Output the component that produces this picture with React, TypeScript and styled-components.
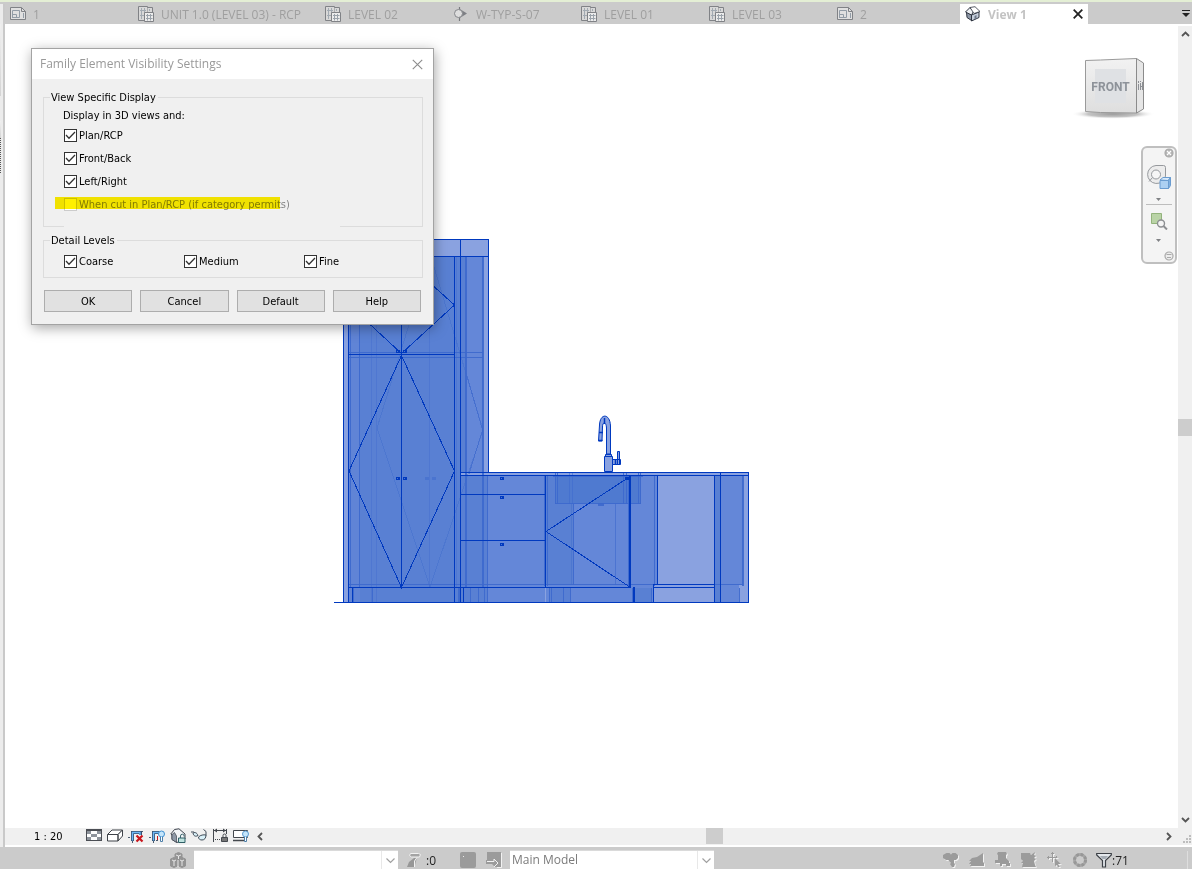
import React from "react";
import styled, { createGlobalStyle, css } from "styled-components";

const ui = `"Open Sans", "Noto Sans", "Liberation Sans", sans-serif`;
const dialogFont = `"DejaVu Sans Condensed", "Noto Sans", "Liberation Sans", sans-serif`;

const GlobalStyle = createGlobalStyle`
  *, *::before, *::after { box-sizing: border-box; }
  body { margin: 0; background: #fff; font-family: ${ui}; }
  button, select, input { font: inherit; color: inherit; margin: 0; padding: 0; }
  svg { display: block; flex: none; }
`;

const Page = styled.div`
  min-height: 100vh;
  display: flex;
  flex-direction: column;
  border-top: 2px solid #e4efd5;
`;

/* ---------- tabs ---------- */

const TabBar = styled.nav`
  display: flex;
  align-items: flex-end;
  height: 22px;
  padding-left: 5px;
  background: #cbcbcb;
`;

const Tab = styled.div<{ $active?: boolean; $wide?: boolean }>`
  display: flex;
  align-items: center;
  flex: none;
  width: ${(p) => (p.$wide ? 187 : 128)}px;
  height: 20px;
  padding: 0 5px;
  background: ${(p) => (p.$active ? "#fff" : "transparent")};
`;

const TabButton = styled.button<{ $active?: boolean }>`
  display: flex;
  align-items: center;
  gap: 7px;
  flex: 1;
  height: 20px;
  border: 0;
  background: none;
  font-size: 12px;
  line-height: 20px;
  font-weight: ${(p) => (p.$active ? 700 : 400)};
  color: ${(p) => (p.$active ? "#c3c3c3" : "#9f9f9f")};
  white-space: nowrap;
`;

const TabLabel = styled.span`
  padding-top: 1px;
`;

const IconButton = styled.button<{ $w?: number; $h?: number }>`
  display: flex;
  align-items: center;
  justify-content: center;
  flex: none;
  width: ${(p) => p.$w ?? 16}px;
  height: ${(p) => p.$h ?? 16}px;
  border: 0;
  background: none;
`;

const TabMenu = styled(IconButton)`
  margin-left: auto;
  align-self: center;
`;

/* ---------- work area ---------- */

const Workspace = styled.div`
  display: flex;
  flex: 1;
`;

const Gutter = styled.div`
  display: flex;
  flex-direction: column;
  width: 5px;
  flex: none;
  margin-top: -20px;
  border-right: 2px solid #c9c9c9;
  background: #ececec;
`;

const GutterPanel = styled.div<{ $h: number; $top: number; $dots?: boolean }>`
  width: 1px;
  height: ${(p) => p.$h}px;
  margin-top: ${(p) => p.$top}px;
  background: ${(p) =>
    p.$dots
      ? "repeating-linear-gradient(#555 0 1px, #eee 1px 2px)"
      : "linear-gradient(#f0f0f0, #d4d4d4)"};
`;

const ViewColumn = styled.div`
  display: flex;
  flex-direction: column;
  flex: 1;
  min-width: 0;
`;

const CanvasRow = styled.div`
  display: flex;
  flex: 1;
`;

const Canvas = styled.main`
  position: relative;
  flex: 1;
  min-width: 0;
  min-height: 600px;
  background: #fff;
  overflow: hidden;
`;

const Drawing = styled.svg`
  position: absolute;
  left: 329px;
  top: 215px;
`;

const CubeHolder = styled.div`
  position: absolute;
  right: 23px;
  top: 28px;
`;

const NavPanel = styled.div`
  position: absolute;
  right: 1px;
  top: 122px;
  width: 36px;
  display: flex;
  flex-direction: column;
  align-items: center;
  border: 2px solid #bfbfbf;
  border-radius: 6px;
  background: #f4f4f4;
`;

const NavCorner = styled(IconButton)<{ $top?: number }>`
  align-self: flex-end;
  margin-top: ${(p) => p.$top ?? 0}px;
`;

const NavRule = styled.hr`
  width: 26px;
  height: 1px;
  margin: 0;
  border: 0;
  background: #bdbdbd;
`;

const VerticalBar = styled.div`
  display: flex;
  flex-direction: column;
  justify-content: space-between;
  align-items: center;
  width: 14px;
  margin-top: 2px;
  background: #f0f0f0;
`;

const Thumb = styled.div<{ $vertical?: boolean }>`
  flex: none;
  width: ${(p) => (p.$vertical ? 14 : 17)}px;
  height: ${(p) => (p.$vertical ? 17 : 16)}px;
  background: #cdcdcd;
`;

const ViewBar = styled.div`
  display: flex;
  height: 17px;
  margin-bottom: 2px;
  background: #f0f0f0;
`;

const Scale = styled.button`
  width: 79px;
  padding-left: 29px;
  border: 0;
  background: none;
  text-align: left;
  font-family: ${dialogFont};
  font-size: 11px;
  line-height: 17px;
  color: #000;
`;

const ViewTools = styled.div`
  display: flex;
  gap: 5px;
  padding: 0 3px 0 2px;
`;

const HorizontalBar = styled.div`
  display: flex;
  flex: 1;
  justify-content: space-between;
`;

const Grip = styled.div`
  display: flex;
  align-items: flex-end;
  justify-content: flex-end;
  width: 15px;
  padding: 0 1px 2px 0;
`;

/* ---------- status bar ---------- */

const StatusBar = styled.footer`
  display: flex;
  align-items: center;
  height: 22px;
  padding: 4px 4px 0 170px;
  background: #cbcbcb;
  font-size: 12px;
  color: #222;
`;

const SelectBox = styled.label`
  display: grid;
  width: 204px;
  height: 18px;
  background: #fff;
  box-shadow: 0 -1px 0 #dadada;
  > * { grid-area: 1 / 1; }
  > svg { place-self: center end; pointer-events: none; }
`;

const Select = styled.select`
  width: 100%;
  height: 18px;
  padding: 0 20px 0 2px;
  border: 0;
  appearance: none;
  background: #fff;
  color: #7b7b7b;
  font-size: 12px;
  line-height: 18px;
`;

const StatusCluster = styled.div<{ $gap: number; $end?: boolean }>`
  display: flex;
  align-items: center;
  gap: ${(p) => p.$gap}px;
  padding: 0 8px;
  margin-left: ${(p) => (p.$end ? "auto" : "0")};
`;

const WorksetButton = styled(IconButton)`
  margin-right: 8px;
`;

const Count = styled.span<{ $w: number }>`
  width: ${(p) => p.$w}px;
  white-space: nowrap;
`;

const EndRule = styled.span`
  width: 1px;
  height: 18px;
  margin-left: 57px;
  background: #dedede;
`;

/* ---------- dialog ---------- */

const Dialog = styled.section`
  position: absolute;
  left: 26px;
  top: 24px;
  width: 403px;
  border: 1px solid #a3a3a3;
  background: #f0f0f0;
  box-shadow: 1px 3px 12px rgba(0, 0, 0, 0.35);
`;

const DialogTitle = styled.header`
  display: flex;
  align-items: center;
  justify-content: space-between;
  height: 30px;
  padding: 0 8px;
  background: #fff;
`;

const Title = styled.h1`
  margin: 0;
  font-size: 12px;
  line-height: 16px;
  font-weight: 400;
  color: #999;
`;

const DialogBody = styled.form`
  padding: 11px 10px 12px 11px;
  font-family: ${dialogFont};
  font-size: 11px;
  line-height: 14px;
  color: #000;
`;

const Group = styled.fieldset<{ $open?: boolean }>`
  position: relative;
  min-width: 0;
  margin: 0;
  padding: 4px 6px;
  border: 1px solid #dcdcdc;
  ${(p) =>
    p.$open
      ? css`
          margin-bottom: 6px;
          padding-bottom: 10px;
          &::after {
            content: "";
            position: absolute;
            left: 20px;
            right: 82px;
            bottom: -1px;
            height: 1px;
            background: #f0f0f0;
          }
        `
      : css`
          margin-bottom: 12px;
          padding-top: 2px;
        `}
`;

const Legend = styled.legend`
  padding: 1px 2px 0 1px;
`;

const Caption = styled.p`
  margin: 0 0 1px;
  padding-left: 13px;
`;

const Stack = styled.div`
  display: flex;
  flex-direction: column;
  padding-left: 14px;
`;

const Levels = styled.div`
  display: grid;
  grid-template-columns: 120px 120px 1fr;
  padding-left: 14px;
`;

const Option = styled.label<{ $marked?: boolean }>`
  position: relative;
  display: flex;
  align-items: center;
  gap: 2px;
  height: 23px;
  color: ${(p) => (p.$marked ? "#838383" : "#000")};
  white-space: nowrap;
  ${(p) =>
    p.$marked &&
    css`
      &::after {
        content: "";
        position: absolute;
        left: -9px;
        top: 4px;
        width: 225px;
        height: 12px;
        background: #fff000;
        mix-blend-mode: multiply;
      }
    `}
`;

const BoxWrap = styled.span`
  display: grid;
  > * { grid-area: 1 / 1; }
  > svg { pointer-events: none; }
`;

const Box = styled.input`
  appearance: none;
  width: 13px;
  height: 13px;
  border: 1px solid #333;
  background: #fff;
  &:disabled { border-color: #ccc; }
`;

const Actions = styled.div`
  display: grid;
  grid-template-columns: repeat(4, 1fr);
  gap: 8px;
  padding: 0 2px 0 1px;
`;

const Action = styled.button`
  height: 22px;
  padding-top: 1px;
  border: 1px solid #adadad;
  background: #e1e1e1;
  line-height: 19px;
`;

/* ---------- icons ---------- */

const SheetIcon = () => (
  <svg width="16" height="16" viewBox="0 0 16 16" fill="none">
    <path d="M.5 1.500h11l4 4v8H.5z" fill="#e0e0e0" stroke="#808286" />
    <path d="M11.500 1.500v4h4" stroke="#808286" />
    <path d="M2.500 12V4.500h7V11.500h-7M3 8.500h3.500v3M13.500 7v5" stroke="#929ca6" />
  </svg>
);

const PlanIcon = () => (
  <svg width="16" height="16" viewBox="0 0 16 16" fill="none">
    <path d="M.5.5h9v14h-9z" fill="#d8d8d8" stroke="#808286" />
    <path d="M9.500 1.500h5v5h-5" fill="#d8d8d8" stroke="#808286" />
    <path d="M3.500 2v11M6.500 2v11M2 4.500h6M2 9.500h4M11.500 3v2" stroke="#a2aab2" />
    <path d="M6.500 6.500h9v9h-9z" fill="#ececec" stroke="#808286" />
    <path d="M9.500 8v6.500M12.500 8v6.500M8 9.500h6.500M8 12.500h6.500" stroke="#9ba3ab" />
  </svg>
);

const SectionIcon = () => (
  <svg width="16" height="16" viewBox="0 0 16 16">
    <path d="M6.500 1v14" stroke="#77797d" strokeWidth="1.200" />
    <path d="M6 2.500l8 5-8 5z" fill="#7d7f84" />
    <circle cx="5.500" cy="7.500" r="4" fill="#dedede" stroke="#85878b" />
  </svg>
);

const HouseIcon = () => (
  <svg width="16" height="16" viewBox="0 0 16 16">
    <path d="M1.500 6L6.500 9v5.500L2 11.500z" fill="#8d97a6" stroke="#2f3541" />
    <path d="M6.500 9l7.500-3v5.500l-7.500 3.500z" fill="#c5cedb" stroke="#2f3541" />
    <path d="M.5 6L5 1.500l3.500 4L6.500 9z" fill="#eef1f4" stroke="#2f3541" />
    <path d="M5 1.500l5-.8 5 4.800-6 2z" fill="#fff" stroke="#2f3541" strokeWidth=".8" />
    <path d="M9.500 10l2-1v3.500l-2 1z" fill="#6c7788" />
  </svg>
);

const CloseX = ({ size, color, width }: { size: number; color: string; width: number }) => (
  <svg width={size} height={size} viewBox="0 0 10 10">
    <path d="M.7.7l8.600 8.600M9.300.7L.7 9.300" stroke={color} strokeWidth={width} />
  </svg>
);

const Chevron = ({ turn, color = "#555" }: { turn: number; color?: string }) => (
  <svg width="9" height="9" viewBox="0 0 9 9">
    <path
      d="M1 6l3.500-3.500L8 6"
      fill="none"
      stroke={color}
      strokeWidth="1.800"
      transform={`rotate(${turn} 4.500 4.500)`}
    />
  </svg>
);

const DropMark = () => (
  <svg width="17" height="18" viewBox="0 0 17 18" fill="none">
    <path d="M.5 0v18" stroke="#e8e8e8" />
    <path d="M5.500 7.500l4 4 4-4" stroke="#a0a0a0" strokeWidth="1.200" />
  </svg>
);

const Tick = () => (
  <svg width="13" height="13" viewBox="0 0 13 13">
    <path d="M2 6l3 3.200L11 3" fill="none" stroke="#333" strokeWidth="1.300" />
  </svg>
);

const SmallDown = () => (
  <svg width="6" height="3" viewBox="0 0 6 3">
    <path d="M0 0h5L2.500 3z" fill="#808285" />
  </svg>
);

const viewTools: { name: string; art: React.ReactNode }[] = [
  {
    name: "Detail level",
    art: (
      <g shapeRendering="crispEdges">
        <path d="M0 1h16v12H0z" fill="#4b4e54" />
        <path d="M1 3h14v9H1z" fill="#fff" />
        <path d="M1 3h4v3H1zM11 3h4v3h-4zM5 6h6v3H5zM1 9h4v3H1zM11 9h4v3h-4z" fill="#8e949c" />
      </g>
    ),
  },
  {
    name: "Visual style",
    art: (
      <g fill="#fff" stroke="#3f4349">
        <path d="M.5 6.500l4.500-4.500h10.500l-4.500 4.500z" />
        <path d="M.5 6.500h10.500v6.500H.5zM11 6.500l4.500-4.500v6l-4.500 5z" />
      </g>
    ),
  },
  {
    name: "Crop view",
    art: (
      <g fill="none">
        <path d="M0 9.500h3M13 3.500h3M4.500 13v2" stroke="#4c5c70" strokeDasharray="2 1" />
        <path d="M4.500 13V4.500h8V7" stroke="#35506e" strokeWidth="3" />
        <path d="M4.500 12.500V4.500h7.500V7" stroke="#6db8f8" strokeWidth="1.400" />
        <path d="M8.500 7.500l6 6M14.500 7.500l-6 6" stroke="#c8161d" strokeWidth="2.200" />
      </g>
    ),
  },
  {
    name: "Show crop region",
    art: (
      <g fill="none">
        <path d="M0 9.500h3M4.500 13v2M7 12.500h3" stroke="#4c5c70" strokeDasharray="2 1" />
        <path d="M4.500 13V4.500h6" stroke="#35506e" strokeWidth="3" />
        <path d="M4.500 12.500V4.500h6" stroke="#6db8f8" strokeWidth="1.400" />
        <path d="M8.500 8v4" stroke="#c8161d" />
        <circle cx="12.500" cy="6" r="3" fill="#c4e5fb" stroke="#3e8fd0" />
        <path d="M11.500 9v4.500h2V9" fill="#fff" stroke="#4d7ea8" />
      </g>
    ),
  },
  {
    name: "Lock 3D view",
    art: (
      <g>
        <path d="M4.500 1.500L9 .8l6 5.200v5l-8 3.500-5-3V7L.8 6z" fill="#f2f4f6" stroke="#3d434d" />
        <path d="M2 6.500v5l4.500 3V8l-2-3.500z" fill="#8f99a6" stroke="#3d434d" strokeWidth=".7" />
        <path d="M10.500 10V8a1.800 1.800 0 0 1 3.600 0v.5" fill="none" stroke="#3f6870" />
        <path d="M8.500 10h6.500v4.500H8.500z" fill="#bfe3df" stroke="#2f5f66" />
      </g>
    ),
  },
  {
    name: "Temporary hide or isolate",
    art: (
      <g fill="#d9f0f8" stroke="#3f4b57">
        <path d="M0 4h3l4 4M15 7.500V3.500L12.500 1.500" fill="none" />
        <path d="M7.500 9c2-2 5-2.500 7.500-2 0 3-1.500 5-4 5-2 0-3.500-1-3.500-3z" />
        <path d="M2 5c1.500-1 4-.5 5 2.500-2.500 1.500-4.500.5-5-2.500z" />
      </g>
    ),
  },
  {
    name: "Reveal constraints",
    art: (
      <g fill="none" stroke="#44484e">
        <path d="M1.500 1v13M14.500 1v5M2 2.500h12" />
        <path d="M2 2.500l3-2v4zM14 2.500l-3-2v4z" fill="#44484e" stroke="none" />
        <path d="M3 11.500h6" strokeDasharray="1 1" />
        <path d="M11 9V7.500a1.500 1.500 0 0 1 3 0V9" />
        <path d="M9.500 9.500h6v4h-6z" fill="#777" />
      </g>
    ),
  },
  {
    name: "Worksharing display",
    art: (
      <g fill="none">
        <path d="M.5 2.500h14v7H.5z" fill="#fff" stroke="#44484e" />
        <path d="M0 12.500h11" stroke="#44484e" strokeWidth="1.500" />
        <circle cx="12.500" cy="6" r="3" fill="#c4e5fb" stroke="#5b9bd0" />
        <path d="M11.500 9v4.500h2V9" fill="#fff" stroke="#4d7ea8" />
      </g>
    ),
  },
];

const GreyIcon = ({ children }: { children: React.ReactNode }) => (
  <svg width="16" height="16" viewBox="0 0 16 16">
    <g transform="translate(1 1)" fill="#f2f2f2" stroke="#f2f2f2">{children}</g>
    <g fill="#9b9b9b" stroke="#9b9b9b">{children}</g>
  </svg>
);

const Bricks = () => (
  <svg width="16" height="16" viewBox="0 0 16 16">
    <g fill="#949494" stroke="#949494">
      <path d="M5 2L8.500.5 12 2v6L8.500 9.500 5 8z" />
      <path d="M.5 7L4 5.500 7.500 7v7L4 15.500.5 14zM8.500 7L12 5.500 15.500 7v7L12 15.500 8.500 14z" />
      <path d="M6 3l2.500 1L11 3M8.500 4v3M2 8l2 1 2-1M4 9v5M10 8l2 1 2-1M12 9v5M8 8v7" fill="none" stroke="#f0f0f0" strokeWidth=".9" />
    </g>
  </svg>
);

const selectTools: { name: string; art: React.ReactNode }[] = [
  {
    name: "Select links",
    art: (
      <g stroke="none">
        <path d="M3.500 1h3L8 2.500 9.500 1h3L15 3v3l-2 2H10L8 7.500 6 8H3L0 6V3z" />
        <path d="M5 7h6v4l1 1-1 3H9l-2-3 1-1-2-2z" />
      </g>
    ),
  },
  { name: "Select underlay elements", art: <path d="M3 6l5-1 6-4v9l1 1v3H1l1-2H0l2-3H0z" stroke="none" /> },
  { name: "Select pinned elements", art: <path d="M3 0h8l1 2-1 1v3l3 3v2h1v3h-4v-2H7v2H5v-3H0V8h3V3L2 2z" stroke="none" /> },
  { name: "Select elements by face", art: <path d="M0 1h9l1 2 4-3-1 3 2 1-2 2 2 1-2 2 1 4 1 2H1l1-4H0l2-2-2-2z" stroke="none" /> },
  {
    name: "Drag elements on selection",
    art: (
      <>
        <path d="M0 5.500h10M5.500 0v10M4 2l1.500-1.500L7 2M2 4L.5 5.500 2 7M9 4l1.500 1.500" fill="none" />
        <path d="M8 6l6 6h-3l2 3h-2l-1-2-2 1z" stroke="none" />
      </>
    ),
  },
];

const Progress = () => (
  <svg width="16" height="16" viewBox="0 0 16 16">
    <circle cx="8" cy="8" r="5.500" fill="none" stroke="#a6a6a6" strokeWidth="3" />
    <circle cx="8" cy="8" r="5.500" fill="none" stroke="#979797" strokeWidth="3" strokeDasharray="2.500 1.820" />
  </svg>
);

const Funnel = () => (
  <svg width="16" height="16" viewBox="0 0 16 16">
    <path d="M.7 1.500h14.600v1.500L9.500 8.500V15h-3V8.500L.7 3z" fill="#e4e8ec" stroke="#3c4046" strokeWidth="1.200" />
    <path d="M4 4h8L9.500 7h-3z" fill="#a5acb4" />
  </svg>
);

/* ---------- the elevation ---------- */

const INK = "#0039bf";

type Area = [number, number, number, number, string];
const areas: Area[] = [
  [343, 239, 146, 364, "#8aa2e0"],
  [349, 257, 11, 346, "#6084d6"],
  [360, 257, 106, 346, "#5980d3"],
  [466, 257, 17, 346, "#6487d8"],
  [461, 473, 288, 130, "#8aa2e0"],
  [461, 476, 26, 127, "#5980d3"],
  [487, 476, 58, 127, "#6487d8"],
  [546, 476, 27, 109, "#5980d3"],
  [573, 476, 57, 109, "#6487d8"],
  [631, 476, 26, 109, "#6487d8"],
  [546, 585, 108, 18, "#6487d8"],
  [549, 588, 21, 15, "#5980d3"],
  [635, 588, 17, 15, "#5980d3"],
  [715, 476, 28, 109, "#6487d8"],
  [715, 476, 6, 127, "#5980d3"],
  [721, 585, 18, 18, "#6487d8"],
  [555, 475, 86, 29, "#4f7ad0"],
];

type Stroke = [number, number, number, number, number?];
const faint: Stroke[] = [
  [350, 257, 1, 330], [359, 257, 1, 330], [371, 257, 1, 345, 0.35], [376, 257, 1, 345, 0.35],
  [429, 257, 1, 330, 0.35], [465, 257, 2, 330], [482, 257, 2, 330], [487, 476, 1, 126],
  [349, 352, 134, 1], [349, 357, 134, 1], [349, 584, 305, 1], [715, 584, 28, 1],
  [353, 588, 1, 14], [372, 588, 1, 14], [458, 588, 2, 14], [470, 588, 1, 14], [478, 588, 1, 14],
  [484, 588, 1, 14], [544, 476, 1, 110], [547, 476, 1, 110], [549, 588, 1, 14], [551, 588, 1, 14],
  [563, 588, 1, 14], [570, 588, 1, 14], [632, 588, 1, 14], [651, 588, 1, 14], [573, 504, 1, 81],
  [571, 504, 1, 81, 0.4], [615, 504, 1, 81, 0.6], [628, 476, 1, 110], [654, 476, 1, 110],
  [742, 476, 2, 110], [739, 588, 1, 14], [555, 473, 1, 31], [640, 473, 1, 31], [555, 503, 86, 1],
  [557, 473, 1, 31], [569, 473, 1, 31, 0.5], [572, 473, 1, 31, 0.5], [623, 473, 1, 31],
  [626, 473, 1, 31], [638, 473, 1, 31], [553, 476, 90, 1], [598, 503, 6, 3], [456, 257, 1, 330, 0.3],
];

const solid: Stroke[] = [
  [343, 239, 1, 364], [343, 239, 146, 1], [488, 239, 1, 234], [343, 256, 146, 1], [348, 256, 1, 347],
  [401, 256, 1, 332], [454, 256, 1, 347], [460, 239, 1, 364], [349, 354, 106, 1], [348, 587, 283, 1],
  [352, 588, 1, 15], [463, 588, 1, 15], [334, 602, 415, 1], [460, 472, 289, 1], [460, 475, 289, 1],
  [748, 472, 1, 131], [461, 494, 85, 1], [461, 540, 85, 1], [545, 475, 1, 113], [629, 475, 2, 113],
  [633, 587, 2, 16], [657, 475, 1, 110], [653, 584, 62, 1], [653, 587, 62, 1], [653, 584, 1, 19],
  [714, 475, 1, 128], [720, 472, 1, 131],
];

/* cabinet pulls: a small outlined square beside a stub */
const pulls = [[396, 350], [403, 350], [396, 477], [403, 477], [500, 477], [500, 496], [500, 543], [625, 477]];

const Elevation = () => (
  <Drawing width="416" height="365" viewBox="334 239 416 365" role="img" aria-label="Front elevation">
    <g shapeRendering="crispEdges">
      {areas.map(([x, y, w, h, c], i) => (
        <rect key={i} x={x} y={y} width={w} height={h} fill={c} />
      ))}
      {faint.map(([x, y, w, h, o = 0.9], i) => (
        <rect key={i} x={x} y={y} width={w} height={h} fill="#3c68cd" opacity={o} />
      ))}
      <path
        d="M430 257L377 428l53 159 53-157L431 257"
        fill="none"
        stroke="#3c68cd"
        opacity=".4"
      />
      <path d="M467 376l15.500 54-13.500 44" fill="none" stroke="#3c68cd" opacity=".6" />
      <path d="M425 477h4v3h-4zM432 477h4v3h-4z" fill="#3c68cd" opacity=".5" />
      {solid.map(([x, y, w, h], i) => (
        <rect key={i} x={x} y={y} width={w} height={h} fill={INK} />
      ))}
      {pulls.map(([x, y], i) => (
        <g key={i}>
          <rect x={x} y={y} width="4" height="3" fill={INK} />
          <rect x={x + 1} y={y + 1} width="1" height="1" fill="#4a76d4" />
        </g>
      ))}
      <path
        d="M401.500 355.500l-52.500 115.500 52.500 116.500 53-116.500zM401.500 257.500L349 305l52.500 48.500 53-48.500zM628.500 477.500L546 531.500l83 55"
        fill="none"
        stroke={INK}
      />
    </g>
    <g fill="#8aa2e0" stroke={INK}>
      <path d="M606.500 454V428c0-6-4-7-4-1l-.5 14h-3.500l1-16c.5-12 10.500-12 11 1v28z" />
      <path d="M605.500 454.500h6v2h-6zM604.500 456.500h8v15h-8z" />
      <path d="M612.500 459.500h8v5h-8zM617.500 451.500h2v13h-2z" />
      <path d="M604.500 418v6M599 432.500h4M598.500 440.500h4M615.500 459v6" strokeWidth="1.500" />
    </g>
  </Drawing>
);

const ViewCube = () => (
  <svg width="82" height="70" viewBox="1073 52 82 70" role="img" aria-label="View cube">
    <defs>
      <linearGradient id="face" x1="0" y1="0" x2="0" y2="1">
        <stop offset="0" stopColor="#f2f2f2" />
        <stop offset="1" stopColor="#dedede" />
      </linearGradient>
      <radialGradient id="shade">
        <stop offset="0" stopColor="#9c9c9c" />
        <stop offset=".6" stopColor="#c4c4c4" />
        <stop offset="1" stopColor="#fff" stopOpacity="0" />
      </radialGradient>
    </defs>
    <ellipse cx="1113" cy="114" rx="42" ry="5" fill="url(#shade)" />
    <path d="M1085.500 60.500l15-.5 36-1.500v54.500l-36-.5-15-1z" fill="url(#face)" stroke="#9a9a9a" />
    <path d="M1136.500 58.500l7 4.500v46l-7 4z" fill="#e6e6e6" stroke="#8b8b8b" />
    <path d="M1095 69h31v34h-31z" fill="#dfe1e4" />
    <path d="M1138.500 81v2M1138.500 84v6M1140.500 81v1M1140.500 83v7M1142.500 82v8M1140 86.500h3" stroke="#8d9095" />
    <text x="1110.500" y="91" textAnchor="middle" fontFamily="Roboto, sans-serif" fontWeight="700" fontSize="12" fill="#8d9299">
      FRONT
    </text>
  </svg>
);

const Wheel = () => (
  <svg width="26" height="28" viewBox="0 -2 26 28">
    <path d="M10 1.500h7.500a2 2 0 0 1 2 2V12A9 9 0 1 1 10 1.500z" fill="#ececec" stroke="#96999d" />
    <circle cx="10" cy="10.500" r="4.500" fill="#f6f6f6" stroke="#96999d" />
    <path d="M6.500 13.500L3 17.500" stroke="#96999d" />
    <path d="M14 16l3-2.500h7.500l-2.500 3z" fill="#d8eafb" stroke="#6a9cd0" />
    <path d="M14 16.500h8.500v8H14z" fill="#acd0f2" stroke="#6a9cd0" />
    <path d="M22.500 16.500l2-3v8l-2 3z" fill="#7fb0e0" stroke="#6a9cd0" />
  </svg>
);

const ZoomRegion = () => (
  <svg width="18" height="18" viewBox="0 0 18 18">
    <path d="M1.500 1.500h10v10h-10z" fill="#b9d3a6" stroke="#93b37c" />
    <circle cx="11" cy="11.500" r="3.500" fill="#f4f4f4" stroke="#8d8f92" strokeWidth="1.400" />
    <path d="M13.500 14l3.500 3.500" stroke="#8d8f92" strokeWidth="2" />
  </svg>
);

const RoundMark = ({ minus }: { minus?: boolean }) => (
  <svg width="10" height="10" viewBox="0 0 10 10">
    <circle cx="5" cy="5" r="4" fill={minus ? "#ededed" : "#b5b5b5"} stroke="#aaa" strokeWidth="1.200" />
    {minus ? (
      <path d="M2.500 3.500h5M3 6.500h4" stroke="#aaa" />
    ) : (
      <path d="M3 3l4 4M7 3L3 7" stroke="#fff" strokeWidth="1.200" />
    )}
  </svg>
);

/* ---------- page ---------- */

const tabs = [
  { name: "1", Icon: SheetIcon },
  { name: "UNIT 1.0 (LEVEL 03) - RCP", Icon: PlanIcon, wide: true },
  { name: "LEVEL 02", Icon: PlanIcon },
  { name: "W-TYP-S-07", Icon: SectionIcon },
  { name: "LEVEL 01", Icon: PlanIcon },
  { name: "LEVEL 03", Icon: PlanIcon },
  { name: "2", Icon: SheetIcon },
  { name: "View 1", Icon: HouseIcon, active: true },
];

const Check = ({ label, off }: { label: string; off?: boolean }) => (
  <Option $marked={off}>
    <BoxWrap>
      <Box type="checkbox" defaultChecked={!off} disabled={off} />
      {!off && <Tick />}
    </BoxWrap>
    {label}
  </Option>
);

const VisibilityDialog = () => (
  <Dialog role="dialog" aria-labelledby="dialog-title">
    <DialogTitle>
      <Title id="dialog-title">Family Element Visibility Settings</Title>
      <IconButton aria-label="Close dialog">
        <CloseX size={11} color="#8c8c8c" width={1} />
      </IconButton>
    </DialogTitle>
    <DialogBody onSubmit={(e) => e.preventDefault()}>
      <Group $open>
        <Legend>View Specific Display</Legend>
        <Caption>Display in 3D views and:</Caption>
        <Stack>
          <Check label="Plan/RCP" />
          <Check label="Front/Back" />
          <Check label="Left/Right" />
          <Check label="When cut in Plan/RCP (if category permits)" off />
        </Stack>
      </Group>
      <Group>
        <Legend>Detail Levels</Legend>
        <Levels>
          <Check label="Coarse" />
          <Check label="Medium" />
          <Check label="Fine" />
        </Levels>
      </Group>
      <Actions>
        {["OK", "Cancel", "Default", "Help"].map((name) => (
          <Action key={name} type="button">{name}</Action>
        ))}
      </Actions>
    </DialogBody>
  </Dialog>
);

export default function App() {
  return (
    <>
      <GlobalStyle />
      <Page>
        <TabBar aria-label="Open views">
          {tabs.map(({ name, Icon, wide, active }) => (
            <Tab key={name} $wide={wide} $active={active}>
              <TabButton $active={active}>
                <Icon />
                <TabLabel>{name}</TabLabel>
              </TabButton>
              {active && (
                <IconButton $w={10} aria-label="Close view">
                  <CloseX size={10} color="#222" width={1.8} />
                </IconButton>
              )}
            </Tab>
          ))}
          <TabMenu $w={12} aria-label="List views">
            <svg width="8" height="7" viewBox="0 0 8 7">
              <path d="M0 .5h8" stroke="#222" />
              <path d="M0 3h8L4 7z" fill="#222" />
            </svg>
          </TabMenu>
        </TabBar>

        <Workspace>
          <Gutter>
            <GutterPanel $top={20} $h={72} />
            <GutterPanel $top={25} $h={17} />
            <GutterPanel $top={0} $h={36} $dots />
          </Gutter>
          <ViewColumn>
            <CanvasRow>
              <Canvas>
                <Elevation />
                <CubeHolder><ViewCube /></CubeHolder>
                <NavPanel>
                  <NavCorner $w={12} $h={10} aria-label="Close navigation"><RoundMark /></NavCorner>
                  <IconButton $w={28} $h={36} aria-label="Steering wheel"><Wheel /></IconButton>
                  <IconButton $w={28} $h={10} aria-label="Wheel options"><SmallDown /></IconButton>
                  <NavRule />
                  <IconButton $w={28} $h={31} aria-label="Zoom in region"><ZoomRegion /></IconButton>
                  <IconButton $w={28} $h={8} aria-label="Zoom options"><SmallDown /></IconButton>
                  <NavCorner $w={12} $h={12} $top={6} aria-label="Customize"><RoundMark minus /></NavCorner>
                </NavPanel>
                <VisibilityDialog />
              </Canvas>
              <VerticalBar>
                <IconButton $w={14} $h={17} aria-label="Scroll up"><Chevron turn={0} /></IconButton>
                <Thumb $vertical />
                <IconButton $w={14} $h={17} aria-label="Scroll down"><Chevron turn={180} /></IconButton>
              </VerticalBar>
            </CanvasRow>
            <ViewBar>
              <Scale>1 : 20</Scale>
              <ViewTools>
                {viewTools.map(({ name, art }) => (
                  <IconButton key={name} aria-label={name}>
                    <svg width="16" height="16" viewBox="0 0 16 16">{art}</svg>
                  </IconButton>
                ))}
              </ViewTools>
              <HorizontalBar>
                <IconButton $w={17} aria-label="Scroll left"><Chevron turn={270} /></IconButton>
                <Thumb />
                <IconButton $w={17} aria-label="Scroll right"><Chevron turn={90} /></IconButton>
              </HorizontalBar>
              <Grip>
                <svg width="8" height="8" viewBox="0 0 8 8">
                  <path d="M6 0h2v2H6zM3 3h2v2H3zM6 3h2v2H6zM0 6h2v2H0zM3 6h2v2H3zM6 6h2v2H6z" fill="#bdbdbd" />
                </svg>
              </Grip>
            </ViewBar>
          </ViewColumn>
        </Workspace>

        <StatusBar>
          <WorksetButton aria-label="Worksets"><Bricks /></WorksetButton>
          <SelectBox>
            <Select aria-label="Active workset"><option></option></Select>
            <DropMark />
          </SelectBox>
          <StatusCluster $gap={4}>
            <svg width="16" height="16" viewBox="0 0 16 16">
              <path d="M1 15l2-5 5-4h3L9 9v6z" fill="#979797" />
              <path d="M4.500 1.500h8l2 1-1 2.500h-8l-2-1.500zM11 5.500L8.500 9v6" fill="#a4a4a4" stroke="#f2f2f2" />
            </svg>
            <Count $w={30}>:0</Count>
            <svg width="16" height="16" viewBox="0 0 16 16">
              <rect width="16" height="16" rx="2" fill="#9b9b9b" />
              <path d="M3 4h1v1H3z" fill="#eee" />
            </svg>
            <svg width="22" height="16" viewBox="-6 0 22 16">
              <path d="M1 0h14v15H9L6 12H0V8h1z" fill="#9b9b9b" />
              <path d="M1 9.500h7V7l4 4-4 4M15.500 1v14.500H11" fill="none" stroke="#f2f2f2" />
            </svg>
          </StatusCluster>
          <SelectBox>
            <Select aria-label="Design option"><option>Main Model</option></Select>
            <DropMark />
          </SelectBox>
          <StatusCluster $gap={8} $end>
            {selectTools.map(({ name, art }) => (
              <IconButton key={name} $w={18} aria-label={name}><GreyIcon>{art}</GreyIcon></IconButton>
            ))}
            <Progress />
          </StatusCluster>
          <Funnel />
          <Count $w={18}>:71</Count>
          <EndRule />
        </StatusBar>
      </Page>
    </>
  );
}
